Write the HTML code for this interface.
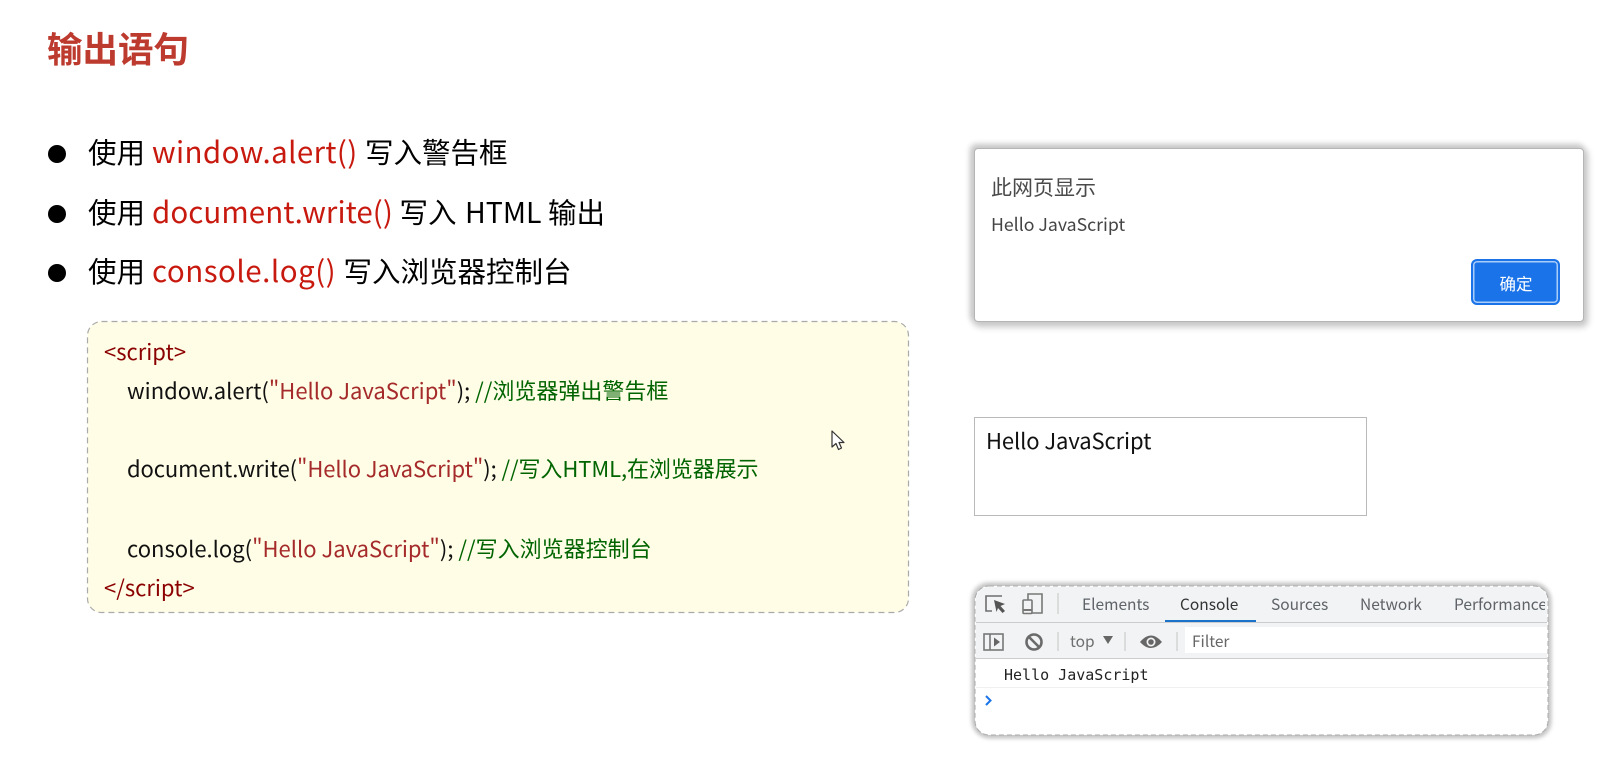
<!DOCTYPE html>
<html lang="zh"><head><meta charset="utf-8"><title>输出语句</title>
<style>
html,body{margin:0;padding:0;background:#fff;width:1623px;height:771px;overflow:hidden}
body{position:relative;font-family:"Noto Sans CJK SC","Liberation Sans",sans-serif;color:#000}
.t{position:absolute;white-space:pre;line-height:1}
.dot{position:absolute;width:18px;height:18px;border-radius:50%;background:#000;left:48px}
.b{font-size:28.5px}
.r{font-size:29.5px;color:#c8190f}
.c{font-size:22px;color:#111}
.m{color:#8b0000}.s{color:#a52a2a}.g{color:#006400}
.dlg{position:absolute;left:974px;top:148px;width:610px;height:174px;background:#fff;border-radius:4px;border:1px solid #b5b5b5;box-sizing:border-box;box-shadow:-2px -2px 6px 2px #c8c8c8,2px 3px 7px 2px #c8c8c8}
.btn{position:absolute;left:1471px;top:259px;width:89px;height:46px;box-sizing:border-box;background:#1a73e8;border:2px solid #1a73e8;border-radius:6px;box-shadow:inset 0 0 0 1.5px #a9cdf8}
.box{position:absolute;left:974px;top:417px;width:393px;height:99px;box-sizing:border-box;border:1px solid #b9b9b9}
.dev{position:absolute;left:975px;top:586px;width:573px;height:149px;box-sizing:border-box;background:#fff;border:1px solid transparent;border-radius:14px;box-shadow:-1px -1px 5px 2px #c4c4c4,1px 1px 5px 2px #c4c4c4;overflow:hidden}
.ln{position:absolute;left:0;right:0}
.tab{font-size:15.5px;color:#5f6368}
</style></head><body>

<div class="t" style="left:47px;top:30px;font-size:35.500px;font-weight:700;color:#bd3a2e">输出语句</div>

<div class="dot" style="top:145px"></div>
<div class="dot" style="top:205px"></div>
<div class="dot" style="top:264px"></div>

<div class="t b" style="left:88px;top:138px">使用</div>
<div class="t r" style="left:152px;top:137px;letter-spacing:.39px">window.alert()</div>
<div class="t b" style="left:365px;top:138px">写入警告框</div>

<div class="t b" style="left:88px;top:198px">使用</div>
<div class="t r" style="left:152px;top:197px;letter-spacing:.07px">document.write()</div>
<div class="t b" style="left:399.500px;top:198px">写入</div>
<div class="t" style="left:465px;top:198px;font-size:28.500px">HTML</div>
<div class="t b" style="left:548px;top:198px">输出</div>

<div class="t b" style="left:88px;top:257px">使用</div>
<div class="t r" style="left:152px;top:256px;letter-spacing:.5px">console.log()</div>
<div class="t b" style="left:343.500px;top:257px">写入浏览器控制台</div>

<svg style="position:absolute;left:86px;top:320px" width="826" height="295" fill="none"><rect x="1.500" y="1.500" width="821" height="291" rx="14" fill="#fffde6" stroke="#aaa" stroke-width="1.200" stroke-dasharray="6 4"/></svg>
<div class="t c" style="left:104px;top:340px"><span class="m">&lt;script&gt;</span></div>
<div class="t c" style="left:127px;top:379px">window.alert(<span class="s">"Hello JavaScript"</span>); <span class="g">//浏览器弹出警告框</span></div>
<div class="t c" style="left:127px;top:457px;letter-spacing:-.09px">document.write(<span class="s">"Hello JavaScript"</span>); <span class="g">//写入HTML,在浏览器展示</span></div>
<div class="t c" style="left:127px;top:537px">console.log(<span class="s">"Hello JavaScript"</span>); <span class="g">//写入浏览器控制台</span></div>
<div class="t c" style="left:104px;top:576px"><span class="m">&lt;/script&gt;</span></div>

<svg style="position:absolute;left:830px;top:429px" width="16" height="24" viewBox="0 0 16 24"><path d="M2 2V18L6 14.500L8.500 20.500L11.500 19L9 13.500H14Z" fill="#fff" stroke="#333" stroke-width="1.200" stroke-linejoin="round"/></svg>

<div class="dlg"></div>
<div class="t" style="left:991px;top:177px;font-size:21px;color:#4a4a4a">此网页显示</div>
<div class="t" style="left:991px;top:216px;font-size:17.700px;color:#444">Hello JavaScript</div>
<div class="btn"></div>
<div class="t" style="left:1499.500px;top:275px;font-size:16.500px;color:#fff">确定</div>

<div class="box"></div>
<div class="t" style="left:986px;top:429px;font-size:22px;letter-spacing:-.1px;color:#111">Hello JavaScript</div>

<div class="dev">
 <div class="ln" style="top:0;height:35px;background:#f1f3f4"></div>
 <div class="ln" style="top:35px;height:1px;background:#ccc"></div>
 <div class="ln" style="top:36px;height:35px;background:#f1f3f4"></div>
 <div class="ln" style="top:71px;height:1px;background:#ccc"></div>
 <div style="position:absolute;left:209px;top:40px;right:0;height:26px;background:#fff"></div>
 <div class="ln" style="top:100px;height:1px;background:#f0f0f0"></div>
 <div style="position:absolute;left:189px;top:33px;width:91px;height:2px;background:#1a73c8"></div>
</div>
<svg style="position:absolute;left:974px;top:585px" width="575" height="151" fill="none"><rect x="1" y="1" width="573" height="149" rx="14" stroke="#aaa" stroke-width="1" stroke-dasharray="5 3"/></svg>
<div class="t tab" style="left:1082px;top:597px">Elements</div>
<div class="t tab" style="left:1180px;top:597px;color:#333">Console</div>
<div class="t tab" style="left:1271px;top:597px">Sources</div>
<div class="t tab" style="left:1360px;top:597px">Network</div>
<div class="t tab" style="left:1454px;top:597px;width:91px;overflow:hidden">Performance</div>
<div class="t tab" style="left:1070px;top:634px;color:#6e6e6e">top</div>
<div class="t tab" style="left:1192px;top:634px;color:#666">Filter</div>
<div class="t" style="left:1004px;top:668px;font-size:15px;font-family:'DejaVu Sans Mono','Liberation Mono',monospace;color:#222">Hello JavaScript</div>

<svg style="position:absolute;left:974px;top:585px" width="220" height="130" viewBox="974 585 220 130" fill="none">
 <path d="M1002 596H986V611H992" stroke="#6e6e6e" stroke-width="1.600"/>
 <path d="M994 600L1005 604L1000.500 606L1005 611L1002.500 613L998 608L996.500 612Z" fill="#555"/>
 <path d="M1028 600V594H1042V613H1031" stroke="#777" stroke-width="1.600"/>
 <rect x="1023" y="600" width="9" height="13.500" rx="1" stroke="#777" stroke-width="1.600"/>
 <path d="M1023 610H1032" stroke="#777" stroke-width="2"/>
 <path d="M1058 593V614M1058 632V651M1125 632V651M1177 632V651" stroke="#ccc" stroke-width="1.200"/>
 <rect x="984" y="634" width="19" height="16" stroke="#777" stroke-width="1.600"/>
 <path d="M990 634V650" stroke="#777" stroke-width="1.600"/>
 <path d="M994 637.500L1000 642L994 646.500Z" fill="#666"/>
 <circle cx="1034" cy="642" r="7.500" stroke="#6a6a6a" stroke-width="2.600"/>
 <path d="M1029 637L1039 647" stroke="#6a6a6a" stroke-width="2.600"/>
 <path d="M1103 636H1113L1108 644Z" fill="#666"/>
 <path d="M1140 642Q1151 629 1162 642Q1151 654 1140 642Z" fill="#666"/>
 <circle cx="1151" cy="642" r="4.500" fill="#f1f3f4"/>
 <circle cx="1151" cy="642" r="2.800" fill="#666"/>
 <path d="M986 696L990.500 700.500L986 705" stroke="#1a73e8" stroke-width="2"/>
</svg>
</body></html>
